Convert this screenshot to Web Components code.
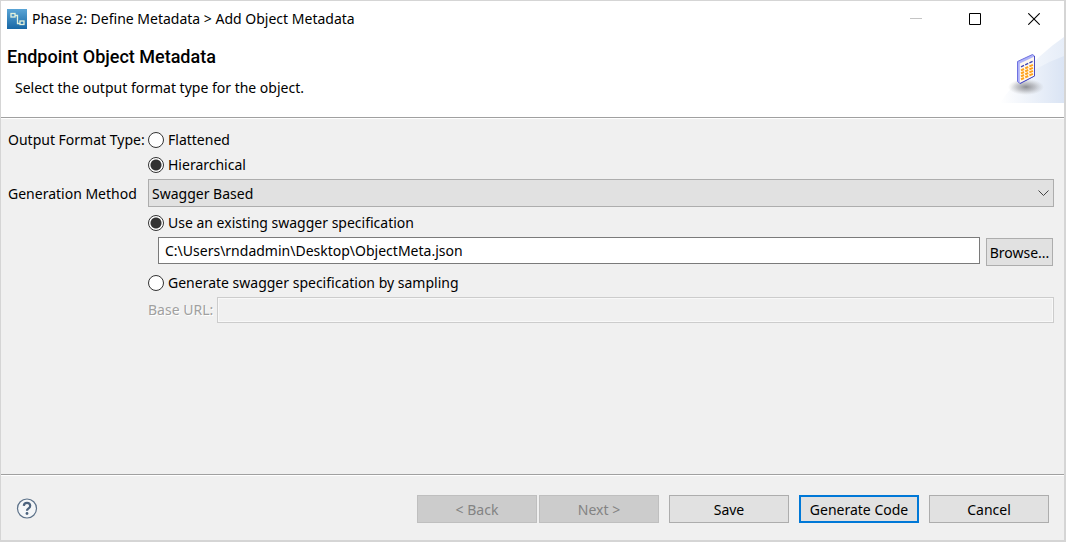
<!DOCTYPE html>
<html lang="en">
<head>
<meta charset="utf-8">
<title>Phase 2: Define Metadata &gt; Add Object Metadata</title>
<style>
  html, body { height: 100%; }
  body {
    margin: 0;
    font: 14px/20px "Noto Sans", "Open Sans", sans-serif;
    color: #000;
    background: #d5d5d5;
  }
</style>
</head>
<body>
<wizard-dialog>
  <title-bar slot="title">Phase 2: Define Metadata &gt; Add Object Metadata</title-bar>
  <wizard-banner slot="banner">
    <span slot="heading">Endpoint Object Metadata</span>
    <span slot="message">Select the output format type for the object.</span>
  </wizard-banner>
  <metadata-form></metadata-form>
  <wizard-footer slot="footer">
    <push-button disabled>&lt; Back</push-button>
    <push-button disabled>Next &gt;</push-button>
    <push-button class="apart">Save</push-button>
    <push-button class="apart" primary>Generate Code</push-button>
    <push-button class="apart">Cancel</push-button>
  </wizard-footer>
</wizard-dialog>

<script>
  class BaseElement extends HTMLElement {
    constructor() {
      super();
      const tpl = document.createElement('template');
      tpl.innerHTML = this.constructor.markup;
      this.attachShadow({ mode: 'open' }).append(tpl.content.cloneNode(true));
    }
  }

  customElements.define('wizard-dialog', class extends BaseElement {
    static markup = `
      <style>
        :host {
          display: flex; flex-direction: column; box-sizing: border-box; min-height: 100%;
          border: solid #d5d5d5; border-width: 1px 2px 2px 1px; background: #f0f0f0;
        }
        main { flex: 1; }
      </style>
      <slot name="title"></slot>
      <slot name="banner"></slot>
      <main><slot></slot></main>
      <slot name="footer"></slot>`;
  });

  customElements.define('title-bar', class extends BaseElement {
    static markup = `
      <style>
        :host { display: flex; align-items: center; height: 35px; padding: 0 1px 0 6px; background: #fff; }
        .logo { flex: none; margin-right: 5px; }
        .text { flex: 1; white-space: nowrap; }
        button { width: 59px; height: 35px; padding: 0; border: 0; background: none; display: grid; place-items: center; }
      </style>
      <svg class="logo" width="20" height="20" viewBox="0 0 20 20" aria-hidden="true">
        <defs><linearGradient id="g" x1="0" y1="0" x2="0" y2="1">
          <stop offset="0" stop-color="#5aa5d6"/><stop offset="1" stop-color="#1767a5"/></linearGradient></defs>
        <rect width="20" height="20" fill="url(#g)"/>
        <g fill="none" stroke="#e2f1dc" stroke-width="1.3">
          <rect x="4" y="4.5" width="4" height="3.5"/><rect x="13" y="12" width="4" height="3.5"/>
          <path d="M8 6.5h2.500v8H13"/>
        </g>
      </svg>
      <span class="text"><slot></slot></span>
      <button aria-label="Minimize" disabled><svg width="12" height="12"><path d="M0 5.5h12" stroke="#c4c4c4"/></svg></button>
      <button aria-label="Maximize"><svg width="12" height="12"><path d="M.5.5h11v11H.5z" fill="none" stroke="#000"/></svg></button>
      <button aria-label="Close"><svg width="12" height="12"><path d="M.3.3l11.400 11.400M11.700 .3L.3 11.700" stroke="#000" stroke-width="1.1"/></svg></button>`;
  });

  customElements.define('wizard-banner', class extends BaseElement {
    static markup = `
      <style>
        :host {
          display: flex; justify-content: space-between; height: 81px;
          background: #fff; border-bottom: 1px solid #a0a0a0; box-shadow: 0 1px #fff;
        }
        .copy { padding: 11px 0 0 6px; }
        h1 { margin: 0; font: 500 18px/20px Roboto, "Liberation Sans", sans-serif; }
        p { margin: 11px 0 0 8px; }
        svg { flex: none; }
      </style>
      <div class="copy">
        <h1><slot name="heading"></slot></h1>
        <p><slot name="message"></slot></p>
      </div>
      <svg width="76" height="80" viewBox="988 36 76 80" aria-hidden="true">
        <defs>
          <linearGradient id="sky"><stop offset="0" stop-color="#fff"/><stop offset="1" stop-color="#dae4f4"/></linearGradient>
          <linearGradient id="sky2"><stop offset="0" stop-color="#fff"/><stop offset="1" stop-color="#e6edf8"/></linearGradient>
          <radialGradient id="shade"><stop offset="0" stop-color="#6d6d70" stop-opacity=".75"/><stop offset=".5" stop-color="#88888c" stop-opacity=".45"/><stop offset="1" stop-color="#aaa" stop-opacity="0"/></radialGradient>
        </defs>
        <path d="M1000 103Q1030 60 1064 37V103z" fill="url(#sky2)"/>
        <path d="M1000 103Q1020 72 1064 56V103z" fill="url(#sky)"/>
        <ellipse cx="1026" cy="87" rx="18" ry="8" fill="url(#shade)"/>
        <path d="M1017.500 61.500L1032.500 54.500L1034.500 56V76L1020 83.500L1017.500 81.500z" fill="#aeb2f8" stroke="#6f72e0"/>
        <path d="M1019.800 63.500L1034.500 56.500V76L1019.800 83.300z" fill="#fff8ee"/>
        <path d="M1034.500 56V76L1020 83.500" fill="none" stroke="#4a4cc0"/>
        <path d="M1021 66.800l3-1.400m1.200-.6l3-1.400m1.200-.6l3.200-1.500" stroke="#3f45b5" stroke-width="1.300"/>
        <path d="M1021 70.400l3-1.400m1.200-.6l3-1.400m1.200-.6l3.500-1.600M1021 73.400l3-1.400m1.200-.6l3-1.400m1.200-.6l3.500-1.600M1021 76.400l3-1.400m1.200-.6l3-1.400m1.200-.6l3.500-1.600M1021 79.400l3-1.400m1.200-.6l3-1.400m1.200-.6l3.500-1.600" stroke="#ffa21c" stroke-width="2"/>
      </svg>`;
  });

  customElements.define('metadata-form', class extends BaseElement {
    static markup = `
      <style>
        :host { display: block; }
        form {
          display: grid; grid-template-columns: 140px 1fr; align-items: center;
          padding: 9px 10px 16px 7px; white-space: nowrap;
        }
        .wide { grid-column: 2; }
        .radio { display: flex; align-items: center; gap: 4px; height: 25px; }
        input, select { font: inherit; color: inherit; box-sizing: border-box; margin: 0; border-radius: 0; }
        input[type=radio] {
          appearance: none; width: 16px; height: 16px; border: 1px solid #333; border-radius: 50%;
          background: #fff; flex: none;
        }
        input[type=radio]:checked { background: radial-gradient(circle, #333 5px, #fff 6px); }
        .pick { position: relative; display: block; margin: 2px 0 3px; }
        .pick select {
          appearance: none; display: block; width: 100%; height: 28px; padding: 1px 28px 0 3px;
          border: 1px solid #adadad; background: #e1e1e1;
        }
        .pick svg { position: absolute; right: 5px; top: 11px; pointer-events: none; }
        .file { display: flex; gap: 6px; height: 29px; margin: 2px 1px 4px 10px; }
        .file input { flex: 1; min-width: 0; height: 27px; padding: 0 6px; border: 1px solid #7a7a7a; background: #fff; }
        .file push-button { align-self: flex-end; --button-width: 67px; }
        .url { display: flex; align-items: center; gap: 4px; margin-top: 2px; }
        .url label { color: #a0a0a0; text-shadow: 1px 1px #fff; }
        .url input { flex: 1; min-width: 0; height: 26px; border: 1px solid #ccc; background: #f0f0f0; box-shadow: inset 0 0 0 1px #f8f8f8; }
      </style>
      <form>
        <span>Output Format Type:</span>
        <label class="radio"><input type="radio" name="format">Flattened</label>
        <label class="radio wide"><input type="radio" name="format" checked>Hierarchical</label>
        <label for="method">Generation Method</label>
        <div class="pick">
          <select id="method"><option>Swagger Based</option></select>
          <svg width="11" height="7" aria-hidden="true"><path d="M.5.5l5 5 5-5" fill="none" stroke="#444"/></svg>
        </div>
        <label class="radio wide"><input type="radio" name="source" checked>Use an existing swagger specification</label>
        <div class="file wide">
          <input type="text" aria-label="Swagger specification file" value="C:\\Users\\rndadmin\\Desktop\\ObjectMeta.json">
          <push-button>Browse...</push-button>
        </div>
        <label class="radio wide"><input type="radio" name="source">Generate swagger specification by sampling</label>
        <div class="url wide">
          <label for="base">Base URL:</label>
          <input id="base" type="text" disabled>
        </div>
      </form>`;
  });

  customElements.define('push-button', class extends BaseElement {
    static markup = `
      <style>
        :host { display: block; width: var(--button-width, 120px); }
        button {
          display: block; box-sizing: border-box; width: 100%; height: 28px; margin: 0; padding: 1px 0 0;
          border: 1px solid #adadad; border-radius: 0; background: #e1e1e1; font: inherit; color: #000; white-space: nowrap;
        }
        :host([primary]) button { border: 2px solid #0078d7; }
        button:disabled { background: #ccc; border-color: #bfbfbf; color: #838383; }
      </style>
      <button type="button"><slot></slot></button>`;
    connectedCallback() {
      this.shadowRoot.querySelector('button').disabled = this.hasAttribute('disabled');
    }
  });

  customElements.define('wizard-footer', class extends BaseElement {
    static markup = `
      <style>
        :host {
          display: flex; align-items: center; gap: 2px; padding: 20px 15px 17px;
          border-top: 1px solid #a0a0a0; box-shadow: inset 0 1px #fff;
        }
        .help { padding: 0; border: 0; background: none; width: 22px; height: 22px; margin-right: auto; }
        .help svg { display: block; }
        ::slotted(.apart) { margin-left: 8px; }
      </style>
      <button class="help" type="button" aria-label="Help">
        <svg width="22" height="22" viewBox="0 0 22 22">
          <circle cx="11" cy="10.500" r="9.500" fill="#f4f6f8" stroke="#5c7189" stroke-width="1.200"/>
          <path d="M7.800 7.800Q8 4.900 11 4.900T14.200 7.700Q14.200 9.200 12.600 10.300T11 12.800" fill="none" stroke="#4c637e" stroke-width="2.200"/>
          <circle cx="11" cy="15.500" r="1.400" fill="#4c637e"/>
        </svg>
      </button>
      <slot></slot>`;
  });
</script>
</body>
</html>
